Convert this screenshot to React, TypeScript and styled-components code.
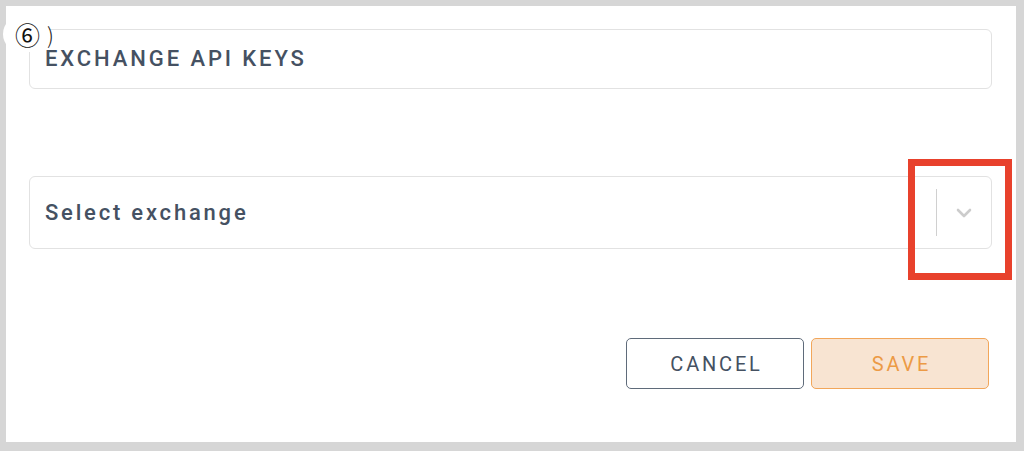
import React from 'react';
import styled, {createGlobalStyle} from 'styled-components';

const GlobalStyle = createGlobalStyle`
  html, body {
    margin: 0;
    padding: 0;
    background: #d6d6d6;
    font-family: Roboto, "Liberation Sans", sans-serif;
  }
`;

const Page = styled.div`
  position: relative;
  width: 1024px;
  height: 451px;
  padding: 6px 8px 9px 6px;
  box-sizing: border-box;
`;

const Panel = styled.div`
  height: 100%;
  background: #ffffff;
  padding: 23px 24px 0 23px;
  box-sizing: border-box;
  display: flex;
  flex-direction: column;
`;

const TitleBox = styled.div`
  height: 60px;
  border: 1px solid #e2e2e2;
  border-radius: 6px;
  box-sizing: border-box;
  display: flex;
  align-items: center;
  padding-left: 15px;
  font-size: 22px;
  line-height: 20px;
  font-weight: 500;
  letter-spacing: 2.9px;
  color: #455162;
`;

const SelectBox = styled.div`
  margin-top: 87px;
  height: 73px;
  border: 1px solid #e2e2e2;
  border-radius: 6px;
  box-sizing: border-box;
  display: flex;
  align-items: center;
  padding-left: 15px;
`;

const SelectLabel = styled.div`
  flex: 1;
  font-size: 22px;
  font-weight: 500;
  letter-spacing: 2.8px;
  color: #455162;
`;

const Separator = styled.div`
  width: 1px;
  height: 47px;
  background: #d0d0d0;
`;

const ChevronWrap = styled.div`
  width: 54px;
  display: flex;
  justify-content: center;
  align-items: center;
`;

const Actions = styled.div`
  margin-top: 89px;
  display: flex;
  justify-content: flex-end;
  gap: 7px;
  padding-right: 3px;
`;

const Button = styled.button<{$primary?: boolean}>`
  width: 178px;
  height: 51px;
  border-radius: 5px;
  box-sizing: border-box;
  font-family: Roboto, "Liberation Sans", sans-serif;
  font-size: 20px;
  font-weight: 400;
  letter-spacing: 2.8px;
  padding: 0 0 0 3px;
  cursor: pointer;
  border: 1.5px solid ${p => (p.$primary ? '#f2a65a' : '#5f6b7a')};
  background: ${p => (p.$primary ? '#f8e4d2' : '#ffffff')};
  color: ${p => (p.$primary ? '#ec9a45' : '#455162')};
`;

const Badge = styled.div`
  position: absolute;
  left: 3px;
  top: 16px;
  width: 47px;
  height: 36px;
  border-radius: 18px;
  background: #ffffff;
  display: flex;
  align-items: center;
  padding-left: 12px;
  box-sizing: border-box;
  font-family: "Noto Sans CJK JP", "DejaVu Sans", sans-serif;
  font-size: 25px;
  line-height: 1;
  color: #111;
`;

const Paren = styled.span`
  position: absolute;
  left: 47px;
  top: 24px;
  height: 21px;
  overflow: visible;
  font-family: "Noto Sans CJK JP", "DejaVu Sans", sans-serif;
  font-size: 22px;
  font-weight: 300;
  line-height: 21px;
  color: #222;
`;

const Highlight = styled.div`
  position: absolute;
  left: 908px;
  top: 159px;
  width: 104px;
  height: 121px;
  border: 7px solid #e8412c;
  box-sizing: border-box;
`;

const Chevron = () => (
  <svg width="18" height="12" viewBox="0 0 18 12" fill="none">
    <path d="M3 3L9 9L15 3" stroke="#cccccc" strokeWidth="2.6" strokeLinecap="round" strokeLinejoin="round" />
  </svg>
);

const App = () => (
  <Page>
    <GlobalStyle />
    <Panel>
      <TitleBox>EXCHANGE API KEYS</TitleBox>
      <SelectBox>
        <SelectLabel>Select exchange</SelectLabel>
        <Separator />
        <ChevronWrap>
          <Chevron />
        </ChevronWrap>
      </SelectBox>
      <Actions>
        <Button>CANCEL</Button>
        <Button $primary>SAVE</Button>
      </Actions>
    </Panel>
    <Badge>⑥</Badge>
    <Paren>)</Paren>
    <Highlight />
  </Page>
);

export default App;
